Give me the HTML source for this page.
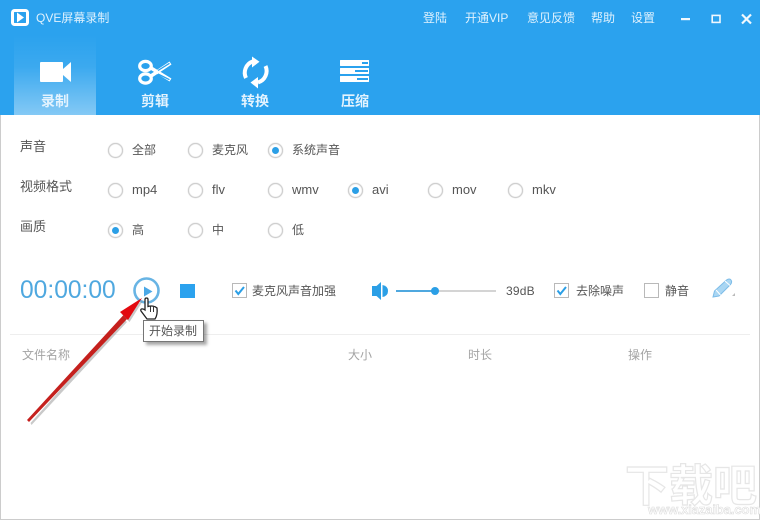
<!DOCTYPE html>
<html lang="zh"><head><meta charset="utf-8">
<style>
html,body{margin:0;padding:0;background:#fff}
#a{position:relative;width:760px;height:520px;overflow:hidden;background:#fff;font-family:"Liberation Sans","Noto Sans CJK SC",sans-serif;font-size:12px;color:#555}
#a div,#a span.t{position:absolute;white-space:nowrap}
.t{line-height:16px}
.h{color:#dff1fd;font-size:12px}
.n{color:#e3f3fe;font-size:14px;font-weight:bold}
.l{font-size:13px;color:#555}
.r{width:13px;height:13px;border:1px solid #cfcfcf;border-radius:50%;background:#fff;box-shadow:0 0 1px #bbb,inset 0 0 1px #ccc}
.r.on::after{content:"";position:absolute;left:3px;top:3px;width:7px;height:7px;border-radius:50%;background:#2b9fe6}
.c{width:13px;height:13px;border:1px solid #b9b9b9;background:#fff}
.g{color:#a3a3a3}
</style></head><body>
<div id="a">
<div style="left:0;top:115px;width:1px;height:405px;background:#ccc"></div>
<div style="right:0;top:115px;width:1px;height:405px;background:#ccc"></div>
<div style="left:0;top:519px;width:760px;height:1px;background:#ccc"></div>
<div style="left:0;top:0;width:760px;height:115px;background:#2ba2ee"></div>
<div style="left:14px;top:35px;width:82px;height:80px;background:linear-gradient(to bottom,rgba(255,255,255,0) 0%,rgba(255,255,255,.08) 40%,rgba(255,255,255,.42) 100%)"></div>

<svg style="position:absolute;left:0;top:0" width="760" height="115" xmlns="http://www.w3.org/2000/svg">
<rect x="12.500" y="10.500" width="15" height="14" rx="2" fill="#2ba2ee" stroke="#fff" stroke-width="3"/>
<path d="M17 12.500L24 17.500L17 22.500Z" fill="#fff"/>
<rect x="40" y="62" width="23" height="20" rx="1" fill="#fff"/>
<path d="M63 69L71 62V82L63 75Z" fill="#fff"/>
<g fill="none" stroke="#fff">
<ellipse cx="145.500" cy="66" rx="5.800" ry="4.600" stroke-width="3.200"/>
<ellipse cx="145.500" cy="78.500" rx="5.800" ry="4.600" stroke-width="3.200"/>
<path d="M151 68L170.500 80 M151 76L170.500 63" stroke-width="3.600"/>
<path d="M158 70.500L169.500 63.300 M158 74L169.500 79.700" stroke="#2ba2ee" stroke-width="1.300"/>
</g>
<g fill="none" stroke="#fff" stroke-width="4">
<path d="M246 78A12 12 0 0 1 252.500 61.500"/>
<path d="M265.500 66A12 12 0 0 1 258 82.500"/>
</g>
<path d="M252 56.500L252 67.500L259.500 61.700Z M258 77L258 88.500L250.500 82.500Z" fill="#fff"/>
<rect x="340" y="60" width="29" height="6" rx=".5" fill="#fff"/>
<rect x="340" y="68" width="29" height="6" rx=".5" fill="#fff"/>
<rect x="340" y="76" width="29" height="6" rx=".5" fill="#fff"/>
<path d="M362 62h6v2h-6z M355 70h13v2h-13z M357 78h11v2h-11z" fill="#2ba2ee"/>
<rect x="681" y="18" width="9" height="2.200" fill="#f0f8fe"/>
<rect x="712.200" y="15.400" width="7.800" height="7" fill="none" stroke="#f0f8fe" stroke-width="1.600"/>
<path d="M742 14.500L751 23.500M751 14.500L742 23.500" stroke="#f0f8fe" stroke-width="2.200" fill="none"/>
</svg>

<span class="t h" style="left:36px;top:10px">QVE屏幕录制</span>
<span class="t h" style="left:423px;top:10px">登陆</span>
<span class="t h" style="left:465px;top:10px">开通VIP</span>
<span class="t h" style="left:527px;top:10px">意见反馈</span>
<span class="t h" style="left:591px;top:10px">帮助</span>
<span class="t h" style="left:631px;top:10px">设置</span>

<span class="t n" style="left:41px;top:93px">录制</span>
<span class="t n" style="left:141px;top:93px">剪辑</span>
<span class="t n" style="left:241px;top:93px">转换</span>
<span class="t n" style="left:341px;top:93px">压缩</span>

<span class="t l" style="left:20px;top:139px">声音</span>
<span class="t l" style="left:20px;top:179px">视频格式</span>
<span class="t l" style="left:20px;top:219px">画质</span>

<div class="r" style="left:108px;top:143px"></div><span class="t" style="left:132px;top:142px">全部</span>
<div class="r" style="left:188px;top:143px"></div><span class="t" style="left:212px;top:142px">麦克风</span>
<div class="r on" style="left:268px;top:143px"></div><span class="t" style="left:292px;top:142px">系统声音</span>

<div class="r" style="left:108px;top:183px"></div><span class="t" style="left:132px;top:182px;font-size:13px">mp4</span>
<div class="r" style="left:188px;top:183px"></div><span class="t" style="left:212px;top:182px;font-size:13px">flv</span>
<div class="r" style="left:268px;top:183px"></div><span class="t" style="left:292px;top:182px;font-size:13px">wmv</span>
<div class="r on" style="left:348px;top:183px"></div><span class="t" style="left:372px;top:182px;font-size:13px">avi</span>
<div class="r" style="left:428px;top:183px"></div><span class="t" style="left:452px;top:182px;font-size:13px">mov</span>
<div class="r" style="left:508px;top:183px"></div><span class="t" style="left:532px;top:182px;font-size:13px">mkv</span>

<div class="r on" style="left:108px;top:223px"></div><span class="t" style="left:132px;top:222px">高</span>
<div class="r" style="left:188px;top:223px"></div><span class="t" style="left:212px;top:222px">中</span>
<div class="r" style="left:268px;top:223px"></div><span class="t" style="left:292px;top:222px">低</span>

<span class="t" style="left:20px;top:276px;font-size:24.600px;line-height:30px;color:#4fa8df">00:00:00</span>

<div class="c" style="left:232px;top:283px"></div><span class="t" style="left:252px;top:283px">麦克风声音加强</span>
<span class="t" style="left:506px;top:283px;letter-spacing:.2px">39dB</span>
<div class="c" style="left:554px;top:283px"></div><span class="t" style="left:576px;top:283px">去除噪声</span>
<div class="c" style="left:644px;top:283px"></div><span class="t" style="left:665px;top:283px">静音</span>

<div style="left:396px;top:290px;width:100px;height:2px;background:#d4d4d4"></div>
<div style="left:396px;top:290px;width:39px;height:2px;background:#4fa8df"></div>
<div style="left:431px;top:287px;width:8px;height:8px;border-radius:50%;background:#2b9fe6"></div>

<div style="left:10px;top:334px;width:740px;height:1px;background:#eee"></div>
<span class="t g" style="left:22px;top:347px">文件名称</span>
<span class="t g" style="left:348px;top:347px">大小</span>
<span class="t g" style="left:468px;top:347px">时长</span>
<span class="t g" style="left:628px;top:347px">操作</span>

<span class="t" style="left:625px;top:462px;font-size:44px;line-height:50px;color:#fff;-webkit-text-stroke:1.200px #e6e6e6;font-weight:bold">下载吧</span>
<span class="t" style="left:648px;top:503px;font-size:13px;line-height:14px;color:#fff;-webkit-text-stroke:.6px #dcdcdc;font-weight:bold;letter-spacing:-.1px">www.xiazaiba.com</span>

<svg style="position:absolute;left:0;top:0" width="760" height="520" xmlns="http://www.w3.org/2000/svg">
<circle cx="146.500" cy="290.500" r="12" fill="none" stroke="#68b4e4" stroke-width="2.600"/>
<path d="M144 286.500L152.500 291.500L144 296.500Z" fill="#4ba8e6"/>
<rect x="180" y="284" width="15" height="14" fill="#2ba2ee"/>
<path d="M235.500 290.500l2.800 3.500 5.700-7" fill="none" stroke="#2b9fe6" stroke-width="2"/>
<path d="M557.500 290.500l2.800 3.500 5.700-7" fill="none" stroke="#2b9fe6" stroke-width="2"/>
<path d="M372 286h4.500L381 282v18l-4.500-4H372z" fill="#2b9fe6"/>
<path d="M382.500 285q5.500 1 5.500 6t-5.500 6z" fill="#2b9fe6"/>
<path d="M713 297l1.500-6 12-11q3-2 4.500 0t-.5 4.500L719 296z" fill="#a9d6f3" stroke="#7dbce8" stroke-width="1"/>
<path d="M716 290l4.500 5M725 281l5 4.500" stroke="#fff" stroke-width="1" fill="none"/>
<path d="M735 293v3h-3z" fill="#bbb"/>
<path d="M29 421L122 317l3.500 3L30 423Z" fill="#777" fill-opacity=".4" transform="translate(1.500 2)"/>
<path d="M27 420L124 314.500l4 3.500L29 422Z" fill="#c5201d"/>
<path d="M142 298L120 312L128 320Z" fill="#888" fill-opacity=".45" transform="translate(1.500 2)"/>
<path d="M142 298L120 312L128 320Z" fill="#e3090f"/>
<path d="M145 299.500c0-2 3-2 3 0v7c3-1 7-.5 9 1.500.5 4 0 8-2 11h-8l-6-8c-1-2 1-3 4-1v-11z" fill="#fff" stroke="#222" stroke-width="1.300"/>
<path d="M150.500 306v6M153.500 307v5" stroke="#222" stroke-width=".9" fill="none"/>
</svg>

<div style="left:143px;top:320px;width:59px;height:20px;background:#fff;border:1px solid #767676;box-shadow:3px 3px 3px rgba(0,0,0,.35)"></div>
<span class="t" style="left:149px;top:323px;color:#555">开始录制</span>
</div>
</body></html>
